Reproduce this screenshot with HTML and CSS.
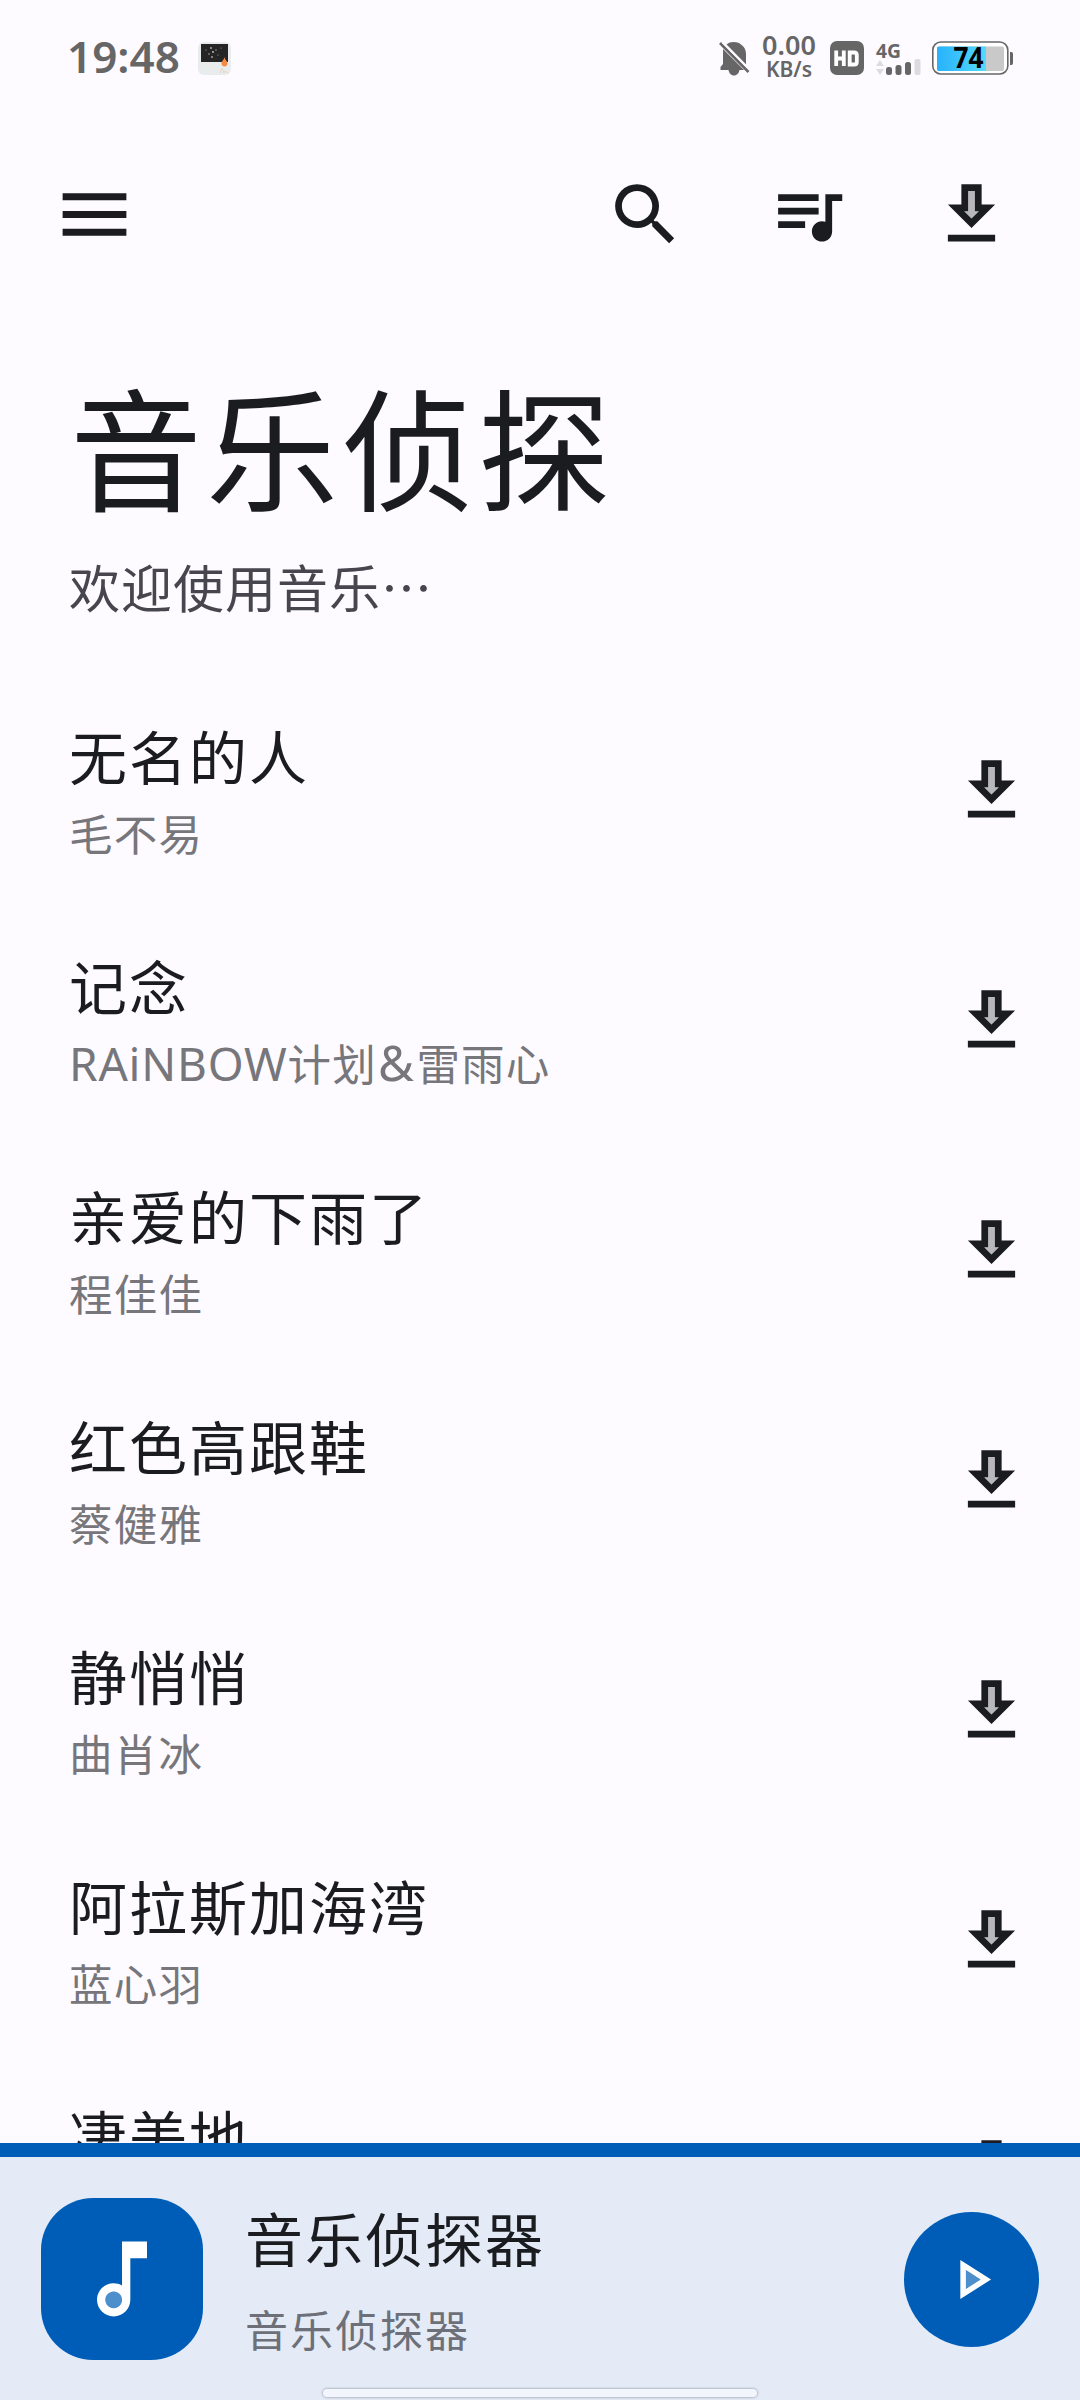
FILE: index.html
```html
<!DOCTYPE html>
<html lang="zh-CN">
<head>
<meta charset="utf-8">
<title>音乐侦探</title>
<link rel="stylesheet" href="styles.css">
</head>
<body>
<svg class="defs" width="0" height="0" aria-hidden="true">
  <symbol id="download" viewBox="0 0 24 24">
    <path d="M13 9V5h-2v6H9.830L12 13.170 14.170 11H13z" opacity=".3"/>
    <path d="M15 9V3H9v6H5l7 7 7-7h-4zm-3 4.170L9.830 11H11V5h2v6h1.170L12 13.170zM5 18h14v2H5z"/>
  </symbol>
</svg>
<div class="app">
  <header class="status">
    <span class="clock">19:48</span>
    <svg class="thumb" width="33" height="33" viewBox="0 0 33 33">
      <rect width="33" height="33" rx="6" fill="#e9ecec"/>
      <rect x="3" y="2" width="27" height="18" fill="#252525"/>
      <g fill="#aaa"><circle cx="13" cy="6" r="1"/><circle cx="15" cy="10" r="1.1"/><circle cx="11" cy="12" r=".8"/><circle cx="18" cy="8" r=".7"/><circle cx="14" cy="15" r=".9"/><circle cx="8" cy="8" r=".6"/><circle cx="20" cy="13" r=".6"/><circle cx="23" cy="6" r=".5"/></g>
      <path d="M26.500 15c.5 3 3 4 3 6.500 0 4-6 4-6 0 0-2.500 2.500-3.500 3-6.500z" fill="#f58a45"/>
      <path d="M22 31l2-5 2 5 1-2 3 2" fill="none" stroke="#e8d5c6"/>
    </svg>
    <svg class="bell" width="31" height="35" viewBox="0 0 31 35" fill="#666667">
      <path d="M7.500 3.500C11 .3 18 .2 22 3.500c3 2 5 5 5 9.500V23.500zM4 8l21 21h-4.500c-.5 3-2.500 5.500-5.500 5.500S10 32 9.500 29H1.500v-3L4 23z"/>
      <path d="M1 2l28.500 29" stroke="#666667" stroke-width="2.600"/>
      <path d="M3.500 1.200l27 27.200" stroke="#fdfbff" stroke-width="2"/>
    </svg>
    <div class="speed"><span class="rate">0.00</span><span class="unit">KB/s</span></div>
    <svg class="hd" width="34" height="34" viewBox="0 0 34 34">
      <rect width="34" height="34" rx="7" fill="#666667"/>
      <path d="M6.200 9.500v15.500M13.800 9.500v15.500M6.200 17.500h7.300M19.700 11.500h4.500q2.600 0 2.600 2.600v6.800q0 2.600-2.600 2.600h-4.500z" fill="none" stroke="#fff" stroke-width="3.800"/>
    </svg>
    <svg class="signal" width="46" height="36" viewBox="0 0 46 36">
      <text x="0" y="15.500" class="net" textLength="25" lengthAdjust="spacingAndGlyphs">4G</text>
      <path d="M0 24l4-6 4 6zM0 27h8l-4 6z" fill="#dcdbe0"/>
      <g fill="#666667"><rect x="10" y="25" width="6" height="8" rx="2.500"/><rect x="19.500" y="23" width="6" height="10" rx="2.500"/><rect x="29" y="20" width="6" height="13" rx="2.500"/></g>
      <rect x="38.500" y="17" width="6" height="16" rx="2" fill="#dcdbe0"/>
    </svg>
    <svg class="battery" width="82" height="34" viewBox="0 0 82 34">
      <defs><linearGradient id="charge"><stop stop-color="#27b2fb"/><stop offset="1" stop-color="#55d9fd"/></linearGradient></defs>
      <rect x=".8" y="1" width="75" height="32" rx="8" fill="#fff" stroke="#666667" stroke-width="1.600"/>
      <rect x="5" y="5.500" width="67" height="24.500" rx="2" fill="#c9c9ca"/>
      <path d="M7 5.500h47V30H7a2 2 0 0 1-2-2V7.500a2 2 0 0 1 2-2z" fill="url(#charge)"/>
      <path d="M78 11h1.500q1.500 0 1.500 2v9q0 2-1.500 2H78z" fill="#666667"/>
      <text x="21.500" y="26.500" class="level" textLength="30" lengthAdjust="spacingAndGlyphs">74</text>
    </svg>
  </header>

  <nav class="toolbar">
    <svg class="menu" viewBox="0 0 24 24"><path d="M3 18h18v-2H3v2zm0-5h18v-2H3v2zm0-7v2h18V6H3z"/></svg>
    <svg class="icon" viewBox="0 0 24 24"><path d="M15.500 14h-.79l-.28-.27A6.471 6.471 0 0 0 16 9.500 6.500 6.500 0 1 0 9.500 16c1.610 0 3.090-.59 4.230-1.570l.27.28v.79l5 4.990L20.490 19l-4.990-5zm-6 0C7.010 14 5 11.990 5 9.500S7.010 5 9.500 5 14 7.010 14 9.500 11.990 14 9.500 14z"/></svg>
    <svg class="icon" viewBox="0 0 24 24"><path d="M15 6H3v2h12V6zm0 4H3v2h12v-2zM3 16h8v-2H3v2zM17 6v8.180c-.31-.11-.65-.18-1-.18-1.660 0-3 1.340-3 3s1.340 3 3 3 3-1.340 3-3V8h3V6h-5z"/></svg>
    <svg class="icon"><use href="#download"/></svg>
  </nav>

  <section class="heading">
    <h1>音乐侦探</h1>
    <p>欢迎使用音乐…</p>
  </section>

  <main class="songs">
    <div class="song"><div class="info"><div class="name">无名的人</div><div class="artist">毛不易</div></div><svg class="icon"><use href="#download"/></svg></div>
    <div class="song"><div class="info"><div class="name">记念</div><div class="artist"><span class="latin">RAiNBOW</span>计划<span class="latin amp">&amp;</span>雷雨心</div></div><svg class="icon"><use href="#download"/></svg></div>
    <div class="song"><div class="info"><div class="name">亲爱的下雨了</div><div class="artist">程佳佳</div></div><svg class="icon"><use href="#download"/></svg></div>
    <div class="song"><div class="info"><div class="name">红色高跟鞋</div><div class="artist">蔡健雅</div></div><svg class="icon"><use href="#download"/></svg></div>
    <div class="song"><div class="info"><div class="name">静悄悄</div><div class="artist">曲肖冰</div></div><svg class="icon"><use href="#download"/></svg></div>
    <div class="song"><div class="info"><div class="name">阿拉斯加海湾</div><div class="artist">蓝心羽</div></div><svg class="icon"><use href="#download"/></svg></div>
    <div class="song"><div class="info"><div class="name">凄美地</div></div><svg class="icon"><use href="#download"/></svg></div>
  </main>

  <footer class="player">
    <div class="cover">
      <svg width="100" height="100" viewBox="0 0 24 24" fill="#fff"><circle cx="10.010" cy="17" r="2" opacity=".3"/><path d="M12 3l.01 10.550c-.59-.34-1.270-.55-2-.55C7.790 13 6 14.790 6 17s1.790 4 4.010 4S14 19.210 14 17V7h4V3h-6zm-1.990 16c-1.100 0-2-.9-2-2s.9-2 2-2 2 .9 2 2-.9 2-2 2z"/></svg>
    </div>
    <div class="now"><div class="now-name">音乐侦探器</div><div class="now-artist">音乐侦探器</div></div>
    <div class="play">
      <svg width="67" height="67" viewBox="0 0 24 24" fill="#fff"><path d="M10 8.640v6.720L15.270 12z" opacity=".3"/><path d="M8 19l11-7L8 5v14zm2-10.360L15.270 12 10 15.360V8.640z"/></svg>
    </div>
    <div class="handle"></div>
  </footer>
</div>
</body>
</html>
```
FILE: styles.css
```css
* { box-sizing: border-box; }
body, h1, p { margin: 0; font-weight: 400; }
body {
  background: #fdfbff;
  color: #1a1c20;
  font-family: "Noto Sans CJK SC", sans-serif;
}
svg { display: block; flex: none; overflow: visible; }
.defs { position: absolute; }
.app {
  width: 1080px;
  height: 2400px;
  display: flex;
  flex-direction: column;
  overflow: hidden;
}

/* system status bar */
.status {
  height: 116px;
  padding: 0 66px 0 67px;
  display: flex;
  align-items: center;
  flex: none;
  color: #666667;
  font-family: "Noto Sans", sans-serif;
  font-weight: 600;
}
.clock { width: 131px; margin-bottom: 4px; font-size: 44px; line-height: 60px; white-space: nowrap; }
.bell { margin-left: 488px; }
.speed {
  width: 56px;
  margin-left: 11px;
  margin-right: 1px;
  margin-bottom: 3px;
  display: flex;
  flex-direction: column;
  align-items: center;
}
.rate { font-size: 27px; line-height: 24px; }
.unit { font-size: 21px; line-height: 24px; }
.hd { margin-left: 12px; }
.signal { margin-left: 12px; margin-top: 4px; }
.net { font-size: 20px; font-weight: 700; fill: #666667; }
.battery { margin-left: 10px; }
.level { font-size: 28px; font-weight: 700; fill: #000; }

/* toolbar */
.toolbar {
  height: 197px;
  padding: 0 68.500px 0 51.500px;
  display: flex;
  align-items: center;
  gap: 82px;
  flex: none;
}
.icon { width: 81px; height: 81px; fill: currentColor; }
.menu { width: 85px; height: 85px; margin-right: auto; fill: #1c1b1f; }

.heading { padding: 31px 0 0 70px; height: 362px; flex: none; }
.heading h1 { font-size: 132px; line-height: 200px; letter-spacing: 4px; }
.heading p { margin-left: -1px; font-size: 51px; line-height: 84px; letter-spacing: 1px; color: #47464e; }

/* song list */
.songs { flex: 1; min-height: 0; overflow: hidden; }
.song {
  height: 230px;
  padding: 0 48px 0 69px;
  display: flex;
  align-items: center;
  justify-content: space-between;
}
.info { height: 158px; padding-top: 1px; }
.name { font-size: 58px; line-height: 86px; letter-spacing: 2px; }
.artist { font-size: 43.500px; line-height: 70px; letter-spacing: 1.200px; color: #77767b; }
.latin { font-family: "Noto Sans", sans-serif; font-size: 46px; line-height: 1; letter-spacing: .8px; }
.amp { margin-left: 1px; font-size: 49px; letter-spacing: 2.500px; }

/* mini player */
.player {
  position: relative;
  height: 257px;
  flex: none;
  padding: 0 41px 14px;
  border-top: 14px solid #005db7;
  background: #e4ebf7;
  display: flex;
  align-items: center;
}
.cover {
  width: 162px;
  height: 162px;
  margin-top: 14px;
  border-radius: 52px;
  background: #005db7;
  display: grid;
  place-items: center;
}
.now { margin: 0 auto 0 42px; padding-top: 22px; }
.now-name { font-size: 58px; line-height: 90px; letter-spacing: 2px; }
.now-artist { font-size: 43px; line-height: 92px; letter-spacing: 2px; color: #6d7078; }
.play {
  width: 135px;
  height: 135px;
  margin-top: 15px;
  border-radius: 50%;
  background: #005db7;
  display: grid;
  place-items: center;
}
.handle {
  position: absolute;
  left: 323px;
  bottom: 3px;
  width: 434px;
  height: 8px;
  border-radius: 4px;
  background: #f2f5fb;
  box-shadow: 0 0 2px 1px #b4bac6;
}
```
